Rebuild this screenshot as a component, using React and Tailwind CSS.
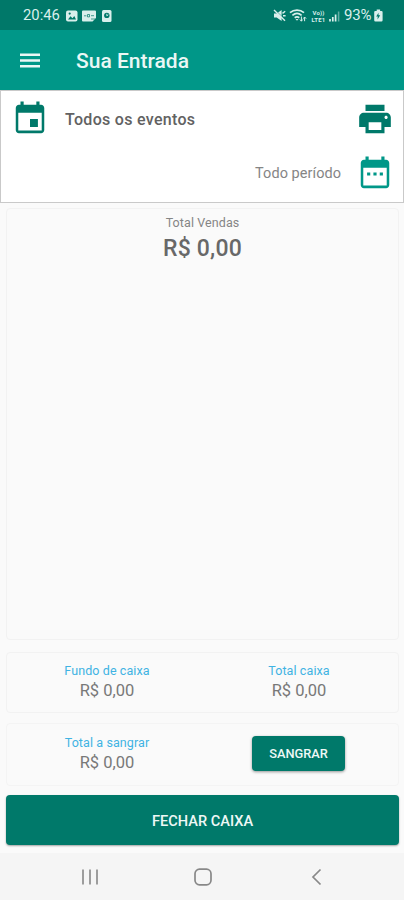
import React from 'react';

const totals = [
  { label: 'Fundo de caixa', value: 'R$ 0,00' },
  { label: 'Total caixa', value: 'R$ 0,00' },
];

export default function App() {
  return (
    <div className="flex h-[900px] w-[404px] flex-col overflow-hidden bg-[#fafafa] font-['Roboto','Liberation_Sans',sans-serif]">
      <StatusBar />
      <AppBar />
      <Filters />

      <main className="flex flex-1 flex-col pt-[5px] pr-[5px] pl-[6px]">
        <section className="h-[432px] rounded-[4px] border border-[#f2f2f2] pt-[5px] text-center">
          <p className="text-[12.5px] leading-[18px] tracking-[0.1px] text-[#858585]">Total Vendas</p>
          <p className="pt-[2px] text-[23px] leading-[30px] font-medium tracking-[0.2px] text-[#686868]">R$ 0,00</p>
        </section>

        <section className="mt-[12px] grid h-[61px] grid-cols-[200px_184px] rounded-[4px] border border-[#f2f2f2] pt-[9px]">
          {totals.map(item => (
            <Total key={item.label} label={item.label} value={item.value} />
          ))}
        </section>

        <section className="mt-[10px] grid h-[63px] grid-cols-[200px_184px] rounded-[4px] border border-[#f4f4f4] pt-[10px]">
          <Total label="Total a sangrar" value="R$ 0,00" />
          <div className="flex justify-center">
            <button className="mt-[2px] mr-[1px] h-[35px] w-[93px] rounded-[4px] bg-[#00796a] pt-px text-[12.8px] font-medium text-[#eef8f6] shadow-[0_1px_3px_rgba(0,0,0,0.4)]">
              SANGRAR
            </button>
          </div>
        </section>

        <button className="mt-[9px] h-[50px] rounded-[4px] bg-[#00796a] pt-[3px] text-[14.6px] font-medium text-[#eef8f6] shadow-[0_1px_2px_rgba(0,0,0,0.35)]">
          FECHAR CAIXA
        </button>
      </main>

      <NavigationBar />
    </div>
  );
}

const StatusBar = () => (
  <header className="flex h-[30px] shrink-0 items-center bg-[#007869] pt-px pr-[21px] pl-[23px] text-[#d9efec]">
    <span className="w-[43px] text-[14.8px] leading-none">20:46</span>

    {/* Gallery */}
    <svg className="h-[12px] w-[12px]" viewBox="0 0 12 12">
      <rect x="0" y="0.5" width="11.5" height="11" rx="2" fill="currentColor" />
      <path d="M2 9.5l2.5-3.3 2 2L8.3 6l1.7 3.5z" fill="#007869" />
      <circle cx="3.7" cy="3.6" r="1.1" fill="#007869" />
    </svg>
    {/* News card */}
    <svg className="ml-[4px] h-[12px] w-[14px]" viewBox="0 0 14 12">
      <path d="M1 0.5h12a1 1 0 0 1 1 1V8l-3.5 3.5H1a1 1 0 0 1-1-1v-9a1 1 0 0 1 1-1z" fill="currentColor" />
      <path d="M2 5.8h2.5M5.5 4.5h2v2.4h-2zM9 5.7h3M9 9h4.5" stroke="#007869" strokeWidth="0.7" fill="none" />
    </svg>
    {/* Device */}
    <svg className="ml-[6px] h-[12px] w-[10px]" viewBox="0 0 10 12">
      <rect x="0" y="0" width="9.5" height="12" rx="1.5" fill="currentColor" />
      <circle cx="4.8" cy="5.4" r="2.7" fill="#007869" />
      <path d="M4.8 3.8v2l1.5-1" stroke="currentColor" strokeWidth="0.9" fill="none" />
    </svg>

    {/* Sound off */}
    <svg className="ml-auto h-[13px] w-[14px]" viewBox="0 0 14 13">
      <path d="M1 4.4h2.7L8.6 1v11L3.7 8.6H1z" fill="currentColor" />
      <path d="M1.8 0.7l10.4 10" stroke="#007869" strokeWidth="0.8" />
      <path d="M1 1l11 10.8M9.5 4.4l2.7-2.2M10 6.7h2.6" stroke="currentColor" strokeWidth="1.4" fill="none" />
    </svg>
    {/* Wifi */}
    <svg className="ml-[2px] h-[13px] w-[18px]" viewBox="0 0 18 13">
      <path d="M1 3.7c4-3.5 10-3.5 14 0M3.4 6.3c2.8-2.2 6.4-2.2 9.2 0M5.7 8.7c1.5-1.1 3.1-1.1 4.6 0" stroke="currentColor" strokeWidth="1.7" fill="none" />
      <path d="M6.5 10l1.5 1.8 1.5-1.8z" fill="currentColor" />
      <path d="M12.4 7.5v4.6M10.9 10.5l1.5 1.7 1.3-1.7M15.6 12.2V8.2M14.3 9.6l1.3-1.6 1.5 1.6" stroke="currentColor" strokeWidth="1" fill="none" />
    </svg>
    <span className="ml-[4px] flex w-[15px] flex-col items-center text-[6px] leading-[7px] font-bold tracking-[0.2px] whitespace-nowrap">
      <span>Vo))</span>
      <span>LTE1</span>
    </span>
    {/* Signal */}
    <svg className="ml-[3px] h-[12px] w-[11px]" viewBox="0 0 11 12">
      <path d="M1 11.5V9M3.8 11.5V7M6.6 11.5V4.5" stroke="currentColor" strokeWidth="1.7" />
      <path d="M9.6 11.5V1.5" stroke="currentColor" strokeWidth="1.5" opacity="0.45" />
    </svg>
    <span className="ml-[4px] w-[30px] text-[15px] leading-none tracking-[-0.2px]">93%</span>
    {/* Battery */}
    <svg className="h-[13px] w-[9px]" viewBox="0 0 9 13">
      <path d="M2.7 0.5h3.4v1.4h1.3a1.2 1.2 0 0 1 1.2 1.2v8.2a1.2 1.2 0 0 1-1.2 1.2H1.4a1.2 1.2 0 0 1-1.2-1.2V3.1a1.2 1.2 0 0 1 1.2-1.2h1.3z" fill="currentColor" />
      <path d="M4.5 3.7L2.2 7.5h1.6l-.3 3 2.7-4.2H4.5z" fill="#007869" />
    </svg>
  </header>
);

const AppBar = () => (
  <div className="flex h-[60px] shrink-0 items-center bg-[#009788] pl-[20px] text-[#eaf7f5]">
    <svg className="h-[15px] w-[20px]" viewBox="0 0 20 15">
      <path d="M0 1.7h20M0 7.5h20M0 13.3h20" stroke="currentColor" strokeWidth="2.5" />
    </svg>
    <h1 className="ml-[36px] pt-[2px] text-[21px] leading-none font-medium">Sua Entrada</h1>
  </div>
);

const Filters = () => (
  <div className="h-[113px] shrink-0 border border-[#c9c9c9] bg-white pr-[9px] pl-[10px]">
    <div className="flex h-[56px] items-center">
      <svg className="h-[38px] w-[38px] text-[#00796a]" viewBox="0 0 24 24" fill="currentColor">
        <path d="M17 12h-5v5h5v-5zM16 1v2H8V1H6v2H5c-1.11 0-1.99.9-1.99 2L3 19c0 1.1.89 2 2 2h14c1.1 0 2-.9 2-2V5c0-1.1-.9-2-2-2h-1V1h-2zm3.4 18.2H4.6V8h14.8v11.2z" />
      </svg>
      <span className="ml-[16px] pt-[2px] text-[16px] font-medium tracking-[0.3px] text-[#626262]">Todos os eventos</span>
      <svg className="ml-auto h-[38px] w-[38px] text-[#00796a]" viewBox="0 0 24 24" fill="currentColor">
        <path d="M19 8H5c-1.66 0-3 1.34-3 3v6h4v4h12v-4h4v-6c0-1.66-1.34-3-3-3zm-3 11H8v-5h8v5zm3-7c-.55 0-1-.45-1-1s.45-1 1-1 1 .45 1 1-.45 1-1 1zm-1-9H6v4h12V3z" />
      </svg>
    </div>
    <div className="flex h-[54px] items-center justify-end">
      <span className="mr-[15px] text-[14.5px] tracking-[0.05px] text-[#858585]">Todo período</span>
      <svg className="h-[38px] w-[38px] text-[#009788]" viewBox="0 0 24 24" fill="currentColor">
        <path d="M9 11H7v2h2v-2zm4 0h-2v2h2v-2zm4 0h-2v2h2v-2zm2-8h-1V1h-2v2H8V1H6v2H5c-1.11 0-1.99.9-1.99 2L3 19c0 1.1.89 2 2 2h14c1.1 0 2-.9 2-2V5c0-1.1-.9-2-2-2zm.4 16.2H4.6V8h14.8v11.2z" />
      </svg>
    </div>
  </div>
);

const Total = ({ label, value }) => (
  <div className="-mt-px text-center">
    <p className="text-[12.5px] leading-[19px] tracking-[0.1px] text-[#40b3e3]">{label}</p>
    <p className="text-[16.5px] leading-[21px] text-[#787878]">{value}</p>
  </div>
);

const NavigationBar = () => (
  <nav className="-mt-px flex h-[47px] shrink-0 items-center bg-[#f5f5f5] pl-[82px] text-[#888888]">
    <svg className="h-[18px] w-[16px]" viewBox="0 0 16 18">
      <path d="M1 1.5v15M8 1.5v15M15 1.5v15" stroke="currentColor" strokeWidth="1.6" />
    </svg>
    <svg className="ml-[96px] h-[18px] w-[18px]" viewBox="0 0 18 18">
      <rect x="1" y="1.2" width="16" height="15.6" rx="4.5" fill="none" stroke="currentColor" strokeWidth="1.7" />
    </svg>
    <svg className="ml-[99px] h-[18px] w-[11px]" viewBox="0 0 11 18">
      <path d="M9.5 1.5L2 9l7.5 7.5" fill="none" stroke="currentColor" strokeWidth="1.7" />
    </svg>
  </nav>
);
